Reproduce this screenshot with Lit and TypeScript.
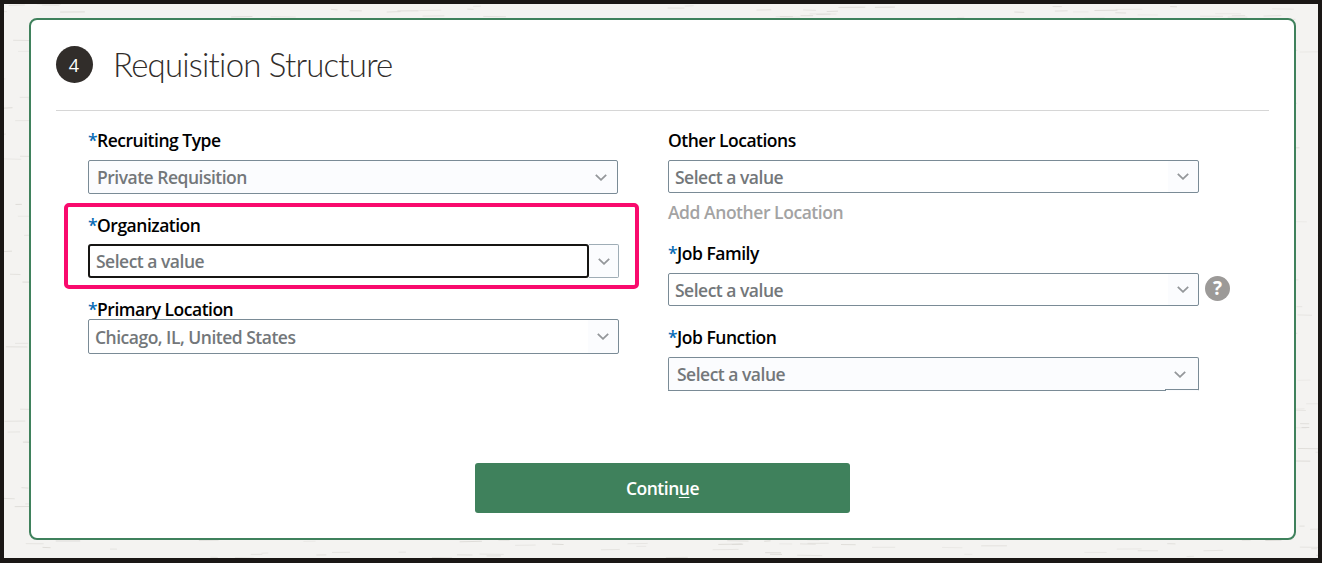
import { LitElement, html, css, svg } from "lit";
import { customElement } from "lit/decorators.js";

function dashes() {
  let seed = 11;
  const r = () => ((seed = (seed * 16807) % 2147483647) / 2147483647);
  const out = [];
  for (let i = 0; i < 1500; i++) {
    const x = r() * 1322;
    const y = r() * 563;
    const w = 5 + r() * 22;
    out.push(svg`<line x1=${x} y1=${y} x2=${x + w} y2=${y + (r() - 0.5)} opacity=${0.35 + r() * 0.65}></line>`);
  }
  return out;
}

const chevron = html`<svg class="chev" width="12" height="7" viewBox="0 0 12 7"><polyline points="0.8,0.8 6,5.8 11.2,0.8"></polyline></svg>`;

@customElement("app-root")
export class AppRoot extends LitElement {
  static styles = css`
    :host { display: block; font-family: "Open Sans", "Liberation Sans", sans-serif; }
    .frame { position: relative; box-sizing: border-box; width: 1322px; height: 563px; background: #f4f3f1; border: solid #1a1715; border-width: 4px 4px 5px 4px; padding: 14px 22px 0 25px; overflow: hidden; }
    .tex { position: absolute; left: -4px; top: -4px; }
    .tex line { stroke: #dedcd8; stroke-width: 1; }
    .card { position: relative; box-sizing: border-box; height: 522px; background: #fff; border: 2px solid #3f815c; border-radius: 8px; display: flex; flex-direction: column; }
    .head { display: flex; align-items: center; margin: 0 25px; padding: 26px 0 27px; border-bottom: 1px solid #d6d6d6; height: 37px; box-sizing: content-box; }
    .num { box-sizing: border-box; width: 37px; height: 37px; padding-right: 1px; border-radius: 50%; background: #312d2a; color: #fff; font-size: 18px; display: flex; align-items: center; justify-content: center; flex: none; }
    h1 { margin: -2px 0 0 20px; font-family: "Lato", sans-serif; font-weight: 300; font-size: 33px; line-height: 38px; color: #312d2a; letter-spacing: -0.8px; }
    .form { display: grid; grid-template-columns: 580px 562px; padding: 20px 0 0 57px; height: 352px; box-sizing: border-box; }
    .col { display: flex; flex-direction: column; align-items: flex-start; }
    .label { height: 20px; line-height: 18px; font-size: 17.5px; font-weight: 600; color: #000; letter-spacing: -0.5px; white-space: nowrap; margin-bottom: 9px; }
    .label b { color: #0a6cb5; font-weight: 600; }
    .select { box-sizing: border-box; height: 33px; width: 531px; display: flex; align-items: center; justify-content: space-between; background: #fbfcfe; border: 1px solid #7a8b96; border-radius: 2px; color: #73777a; font-size: 17.5px; font-weight: 600; letter-spacing: -0.5px; padding: 0 9px 0 6px; white-space: nowrap; }
    .plain { background: linear-gradient(to right, #fff calc(100% - 30px), #fbfcfe calc(100% - 30px)); }
    .chev { flex: none; }
    .chev polyline { fill: none; stroke: #94979a; stroke-width: 1.8; }
    .r1 { height: 34px; padding-left: 8px; width: 530px; padding-right: 10px; }
    .highlight { box-sizing: border-box; width: 575px; height: 86px; margin: 9px 0 10px -24px; padding: 9px 0 0 20px; border: 4px solid #f90a6d; border-radius: 5px; }
    .label.tight { margin-bottom: 8px; }
    .label.flush { margin-bottom: 0; line-height: 20px; }
    .combo { display: flex; width: 531px; height: 34px; }
    .focus { box-sizing: border-box; flex: 1; display: flex; align-items: center; border: 2px solid #161513; border-radius: 3px; color: #73777a; font-size: 17.5px; font-weight: 600; letter-spacing: -0.5px; padding-left: 6px; background: #fff; }
    .btn { box-sizing: border-box; width: 30px; display: flex; align-items: center; justify-content: center; border: 1px solid #9fadb6; border-left: 0; border-radius: 0 2px 2px 0; background: #fbfcfe; }
    .r3 { height: 35px; padding-right: 9px; }
    .add { height: 20px; line-height: 19px; margin: 10px 0 21px; font-size: 17.5px; font-weight: 600; color: #a3a3a3; letter-spacing: -0.45px; }
    .row { display: flex; align-items: center; gap: 6px; margin-bottom: 22px; }
    .q { width: 25px; height: 25px; border-radius: 50%; background: #9c9a98; color: #fff; font-size: 19px; font-weight: 700; display: flex; align-items: center; justify-content: center; flex: none; margin-top: -3px; }
    .last { height: 34px; padding: 0 12px 0 8px; border-bottom-color: transparent; position: relative; }
    .last::before { content: ""; position: absolute; left: -1px; bottom: -1px; width: 498px; height: 1px; background: #7a8b96; }
    .last::after { content: ""; position: absolute; right: -1px; bottom: 0; width: 34px; height: 1px; background: #7a8b96; }
    .foot { display: flex; justify-content: center; padding-right: 1px; }
    button { width: 375px; height: 50px; border: 0; border-radius: 3px; background: #3f815c; color: #fff; font: 600 17.5px "Open Sans", sans-serif; letter-spacing: -0.5px; padding-left: 7px; }
    u { text-underline-offset: 2px; }
  `;

  render() {
    return html`<div class="frame">
      <svg class="tex" width="1322" height="563">${dashes()}</svg>
      <div class="card">
        <div class="head"><div class="num">4</div><h1>Requisition Structure</h1></div>
        <div class="form">
          <div class="col">
            <div class="label"><b>*</b>Recruiting Type</div>
            <div class="select r1"><span>Private Requisition</span>${chevron}</div>
            <div class="highlight">
              <div class="label tight"><b>*</b>Organization</div>
              <div class="combo"><div class="focus">Select a value</div><div class="btn">${chevron}</div></div>
            </div>
            <div class="label flush"><b>*</b>Primary Location</div>
            <div class="select r3 plain"><span>Chicago, IL, United States</span>${chevron}</div>
          </div>
          <div class="col">
            <div class="label">Other Locations</div>
            <div class="select plain"><span>Select a value</span>${chevron}</div>
            <div class="add">Add Another Location</div>
            <div class="label"><b>*</b>Job Family</div>
            <div class="row"><div class="select plain"><span>Select a value</span>${chevron}</div><div class="q">?</div></div>
            <div class="label"><b>*</b>Job Function</div>
            <div class="select last"><span>Select a value</span>${chevron}</div>
          </div>
        </div>
        <div class="foot"><button>Contin<u>u</u>e</button></div>
      </div>
    </div>`;
  }
}
